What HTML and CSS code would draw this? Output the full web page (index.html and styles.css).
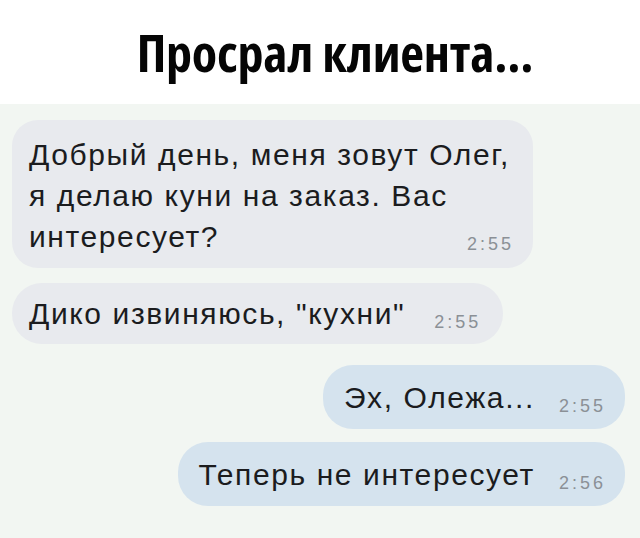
FILE: index.html
```html
<!DOCTYPE html>
<html lang="ru">
<head>
<meta charset="utf-8">
<title>Просрал клиента...</title>
<link rel="stylesheet" href="styles.css">
</head>
<body>
<header class="title-bar">
  <h1 class="title">Просрал клиента...</h1>
</header>
<main class="chat">
  <div class="msg msg-in msg-long">
    <p class="text">Добрый день, меня зовут Олег,<br>я делаю куни на заказ. Вас<br>интересует?</p>
    <span class="time">2:55</span>
  </div>
  <div class="msg msg-in msg-short gap-1">
    <p class="text">Дико извиняюсь, "кухни"</p>
    <span class="time">2:55</span>
  </div>
  <div class="msg msg-out msg-short gap-2">
    <p class="text">Эх, Олежа...</p>
    <span class="time">2:55</span>
  </div>
  <div class="msg msg-out msg-short gap-3">
    <p class="text">Теперь не интересует</p>
    <span class="time">2:56</span>
  </div>
</main>
</body>
</html>
```
FILE: styles.css
```css
html, body {
  margin: 0;
  padding: 0;
}

body {
  width: 640px;
  height: 538px;
  overflow: hidden;
  background: #f2f6f2;
  font-family: "Liberation Sans", Arial, sans-serif;
  color: #1b1c1e;
}

.title-bar {
  height: 104px;
  background: #ffffff;
  display: flex;
  align-items: flex-start;
  justify-content: center;
}

.title {
  margin: 20px 0 0 30px;
  font-family: "Open Sans", "DejaVu Sans", sans-serif;
  font-stretch: 80%;
  font-weight: 700;
  font-size: 52px;
  line-height: 64px;
  color: #050505;
  letter-spacing: -0.2px;
}

.chat {
  display: flex;
  flex-direction: column;
  padding: 16px 15px 0 12px;
}

.msg {
  border-radius: 30px;
}

.msg-in {
  align-self: flex-start;
  background: #e8eaee;
}

.msg-out {
  align-self: flex-end;
  background: #d5e3ee;
}

.text {
  margin: 0;
  font-size: 30px;
  line-height: 41px;
  letter-spacing: 1.6px;
}

.time {
  font-size: 18px;
  color: #8b9096;
  letter-spacing: 3px;
}

/* multi-line bubble: timestamp sits at the end of the last line */
.msg-long {
  display: grid;
  width: 521px;
  box-sizing: border-box;
  padding: 14px 19px 11px 17px;
  border-radius: 26px;
}

.msg-long .text,
.msg-long .time {
  grid-area: 1 / 1;
}

.msg-long .time {
  justify-self: end;
  align-self: end;
  margin-bottom: 2px;
}

/* one-line bubbles */
.msg-short {
  display: flex;
  align-items: baseline;
  gap: 29px;
  padding: 10px 22px 10px 17px;
}

.msg-short .time {
  position: relative;
  top: 4px;
}

.msg-out.msg-short {
  padding: 12px 19px 11px 21px;
  gap: 24px;
}

.gap-1 { margin-top: 15px; }
.gap-2 { margin-top: 21px; }
.gap-3 { margin-top: 13px; }
```
